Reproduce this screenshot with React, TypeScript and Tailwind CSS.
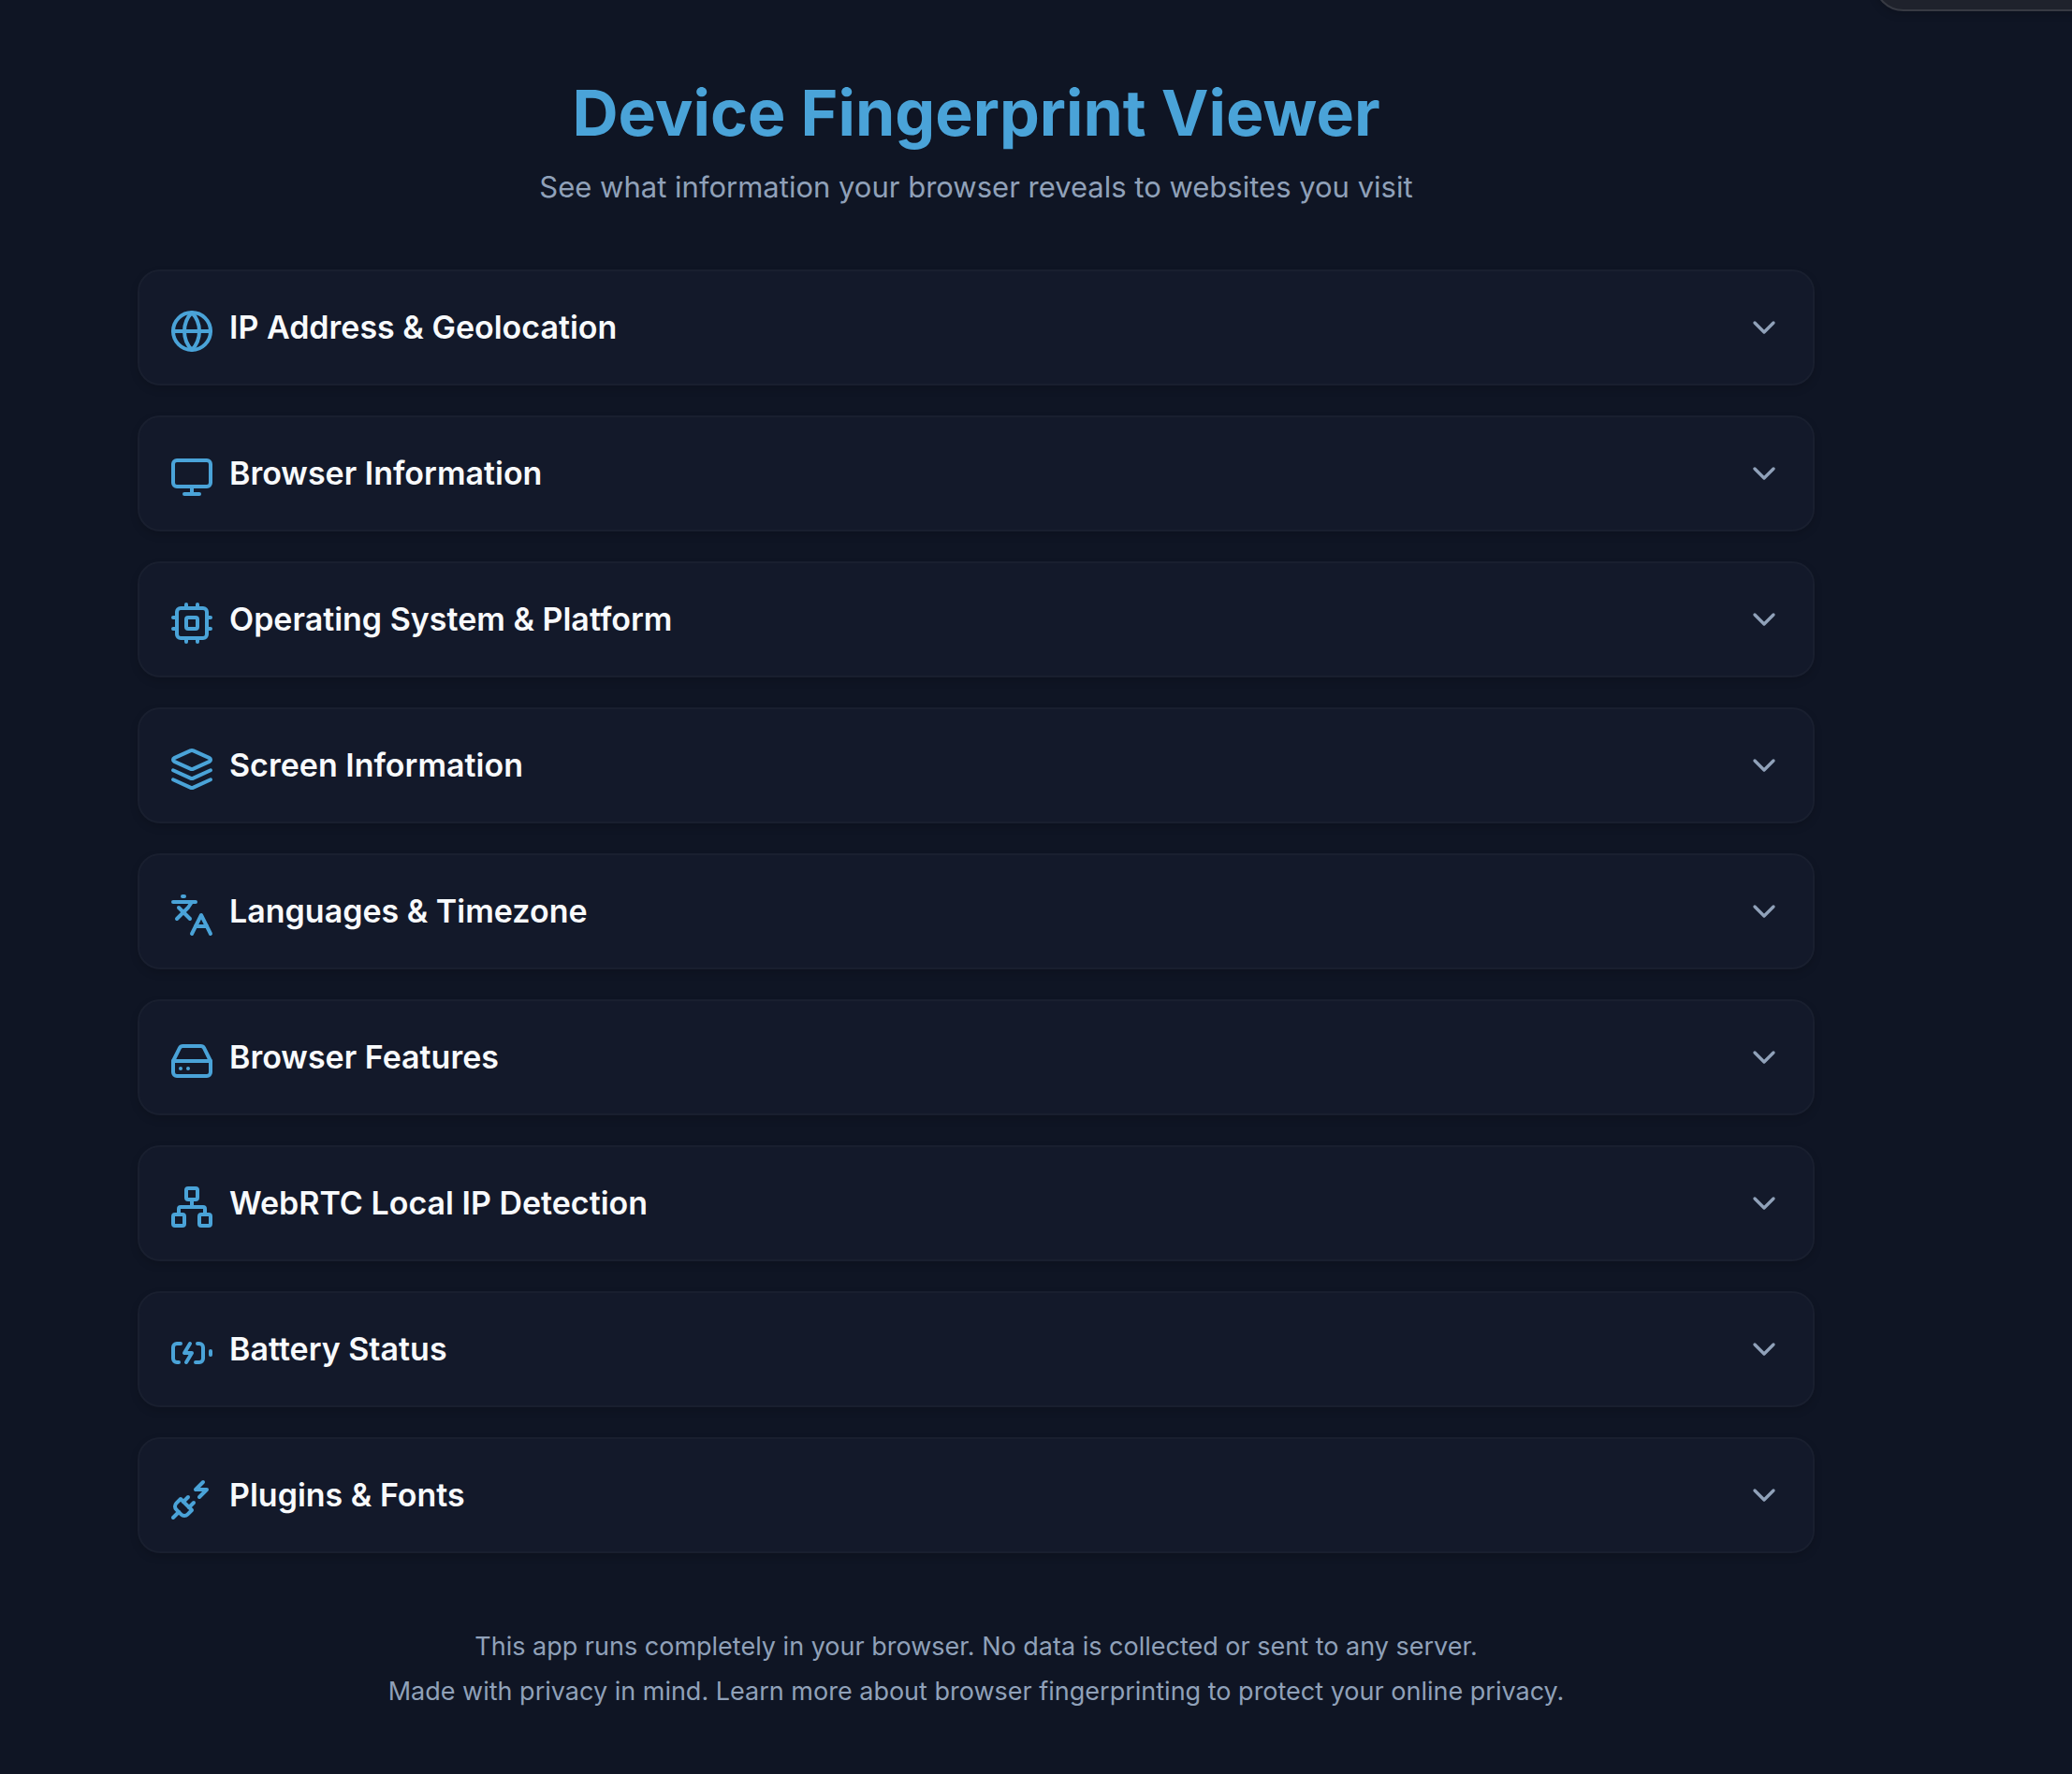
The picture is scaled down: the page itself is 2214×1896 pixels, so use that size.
import { ChevronDown, Globe, HardDrive, Languages, Monitor, Network, PlugZap } from "lucide-react";
import { useState, type ComponentType, type SVGProps } from "react";

type Icon = ComponentType<SVGProps<SVGSVGElement>>;

function StrokeIcon({ children, ...props }: SVGProps<SVGSVGElement>) {
  return (
    <svg
      viewBox="0 0 24 24"
      fill="none"
      stroke="currentColor"
      strokeWidth={2}
      strokeLinecap="round"
      strokeLinejoin="round"
      {...props}
    >
      {children}
    </svg>
  );
}

// Processor with two pins per side
function Processor(props: SVGProps<SVGSVGElement>) {
  return (
    <StrokeIcon {...props}>
      <rect width="16" height="16" x="4" y="4" rx="2" />
      <rect width="6" height="6" x="9" y="9" rx="1" />
      <path d="M15 2v2M15 20v2M2 15h2M2 9h2M20 15h2M20 9h2M9 2v2M9 20v2" />
    </StrokeIcon>
  );
}

// Stacked sheets with straight-ended lower edges
function Stack(props: SVGProps<SVGSVGElement>) {
  return (
    <StrokeIcon {...props}>
      <path d="m12.83 2.18a2 2 0 0 0-1.66 0L2.6 6.08a1 1 0 0 0 0 1.83l8.58 3.91a2 2 0 0 0 1.66 0l8.58-3.9a1 1 0 0 0 0-1.83Z" />
      <path d="m22 17.65-9.17 4.16a2 2 0 0 1-1.66 0L2 17.65" />
      <path d="m22 12.65-9.17 4.16a2 2 0 0 1-1.66 0L2 12.65" />
    </StrokeIcon>
  );
}

// Charging battery with a short terminal
function Battery(props: SVGProps<SVGSVGElement>) {
  return (
    <StrokeIcon {...props}>
      <path d="M15 7h1a2 2 0 0 1 2 2v6a2 2 0 0 1-2 2h-2" />
      <path d="M6 7H4a2 2 0 0 0-2 2v6a2 2 0 0 0 2 2h1" />
      <path d="m11 7-3 5h4l-3 5" />
      <path d="M22 11v2" />
    </StrokeIcon>
  );
}

const sections: { title: string; icon: Icon }[] = [
  { title: "IP Address & Geolocation", icon: Globe },
  { title: "Browser Information", icon: Monitor },
  { title: "Operating System & Platform", icon: Processor },
  { title: "Screen Information", icon: Stack },
  { title: "Languages & Timezone", icon: Languages },
  { title: "Browser Features", icon: HardDrive },
  { title: "WebRTC Local IP Detection", icon: Network },
  { title: "Battery Status", icon: Battery },
  { title: "Plugins & Fonts", icon: PlugZap },
];

function SectionCard({ title, icon: Icon }: { title: string; icon: Icon }) {
  const [open, setOpen] = useState(false);
  return (
    <section className="rounded-3xl border-2 border-[#191f2f] bg-[#13192a] shadow-[0_4px_8px_rgba(0,0,0,0.15)]">
      <h2>
        <button
          type="button"
          aria-expanded={open}
          onClick={() => setOpen(!open)}
          className="flex w-full items-center justify-between p-8 text-left"
        >
          <span className="flex items-center gap-4">
            <span className="pt-2 text-[#4aa3d8]">
              <Icon className="size-12" aria-hidden="true" />
            </span>
            <span className="text-[34px] leading-10 font-semibold text-slate-50">{title}</span>
          </span>
          <ChevronDown className="size-10 text-slate-400" aria-hidden="true" />
        </button>
      </h2>
    </section>
  );
}

export default function App() {
  return (
    <div className="relative min-h-screen overflow-hidden bg-[#0f1524] pr-32 font-['Inter',sans-serif]">
      <div
        aria-hidden="true"
        className="absolute -top-20 -right-8 h-23 w-61 rounded-[32px] border-2 border-[#373a43] bg-[#1f222c] shadow-[0_4px_8px_rgba(0,0,0,0.15)]"
      />
      <main className="mx-auto max-w-448 pt-20 pb-16">
        <header className="mb-16 text-center">
          <h1 className="text-[68px] leading-20 font-bold text-[#4aa3d8]">Device Fingerprint Viewer</h1>
          <p className="mt-4 text-[31px] leading-12 text-slate-400">
            See what information your browser reveals to websites you visit
          </p>
        </header>
        <div className="flex flex-col gap-8">
          {sections.map((section) => (
            <SectionCard key={section.title} {...section} />
          ))}
        </div>
        <footer className="mt-20 flex flex-col gap-2 text-center text-[27px] leading-10 text-slate-400">
          <p>This app runs completely in your browser. No data is collected or sent to any server.</p>
          <p>Made with privacy in mind. Learn more about browser fingerprinting to protect your online privacy.</p>
        </footer>
      </main>
    </div>
  );
}
